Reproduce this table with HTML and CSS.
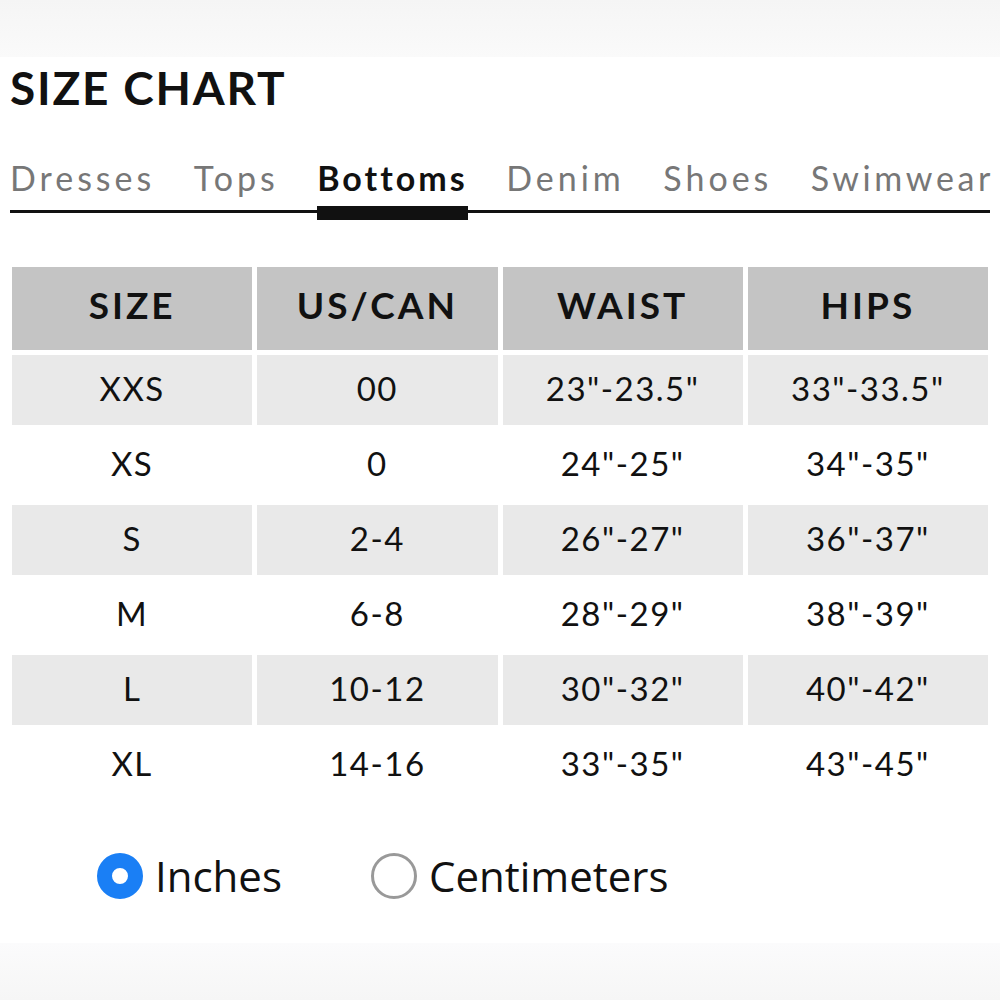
FILE: index.html
```html
<!DOCTYPE html>
<html lang="en">
<head>
    <meta charset="UTF-8">
    <title>Size Chart</title>
    <link rel="stylesheet" href="styles.css">
</head>
<body>

<div class="band"></div>

<div class="page">
    <h1>SIZE CHART</h1>

    <!-- Category tabs -->
    <nav class="tabs">
        <span class="tab">Dresses</span>
        <span class="tab">Tops</span>
        <span class="tab active">Bottoms</span>
        <span class="tab">Denim</span>
        <span class="tab">Shoes</span>
        <span class="tab">Swimwear</span>
    </nav>

    <!-- Size table -->
    <table class="chart">
        <thead>
            <tr><th>SIZE</th><th>US/CAN</th><th>WAIST</th><th>HIPS</th></tr>
        </thead>
        <tbody>
            <tr><td>XXS</td><td>00</td><td>23"-23.5"</td><td>33"-33.5"</td></tr>
            <tr><td>XS</td><td>0</td><td>24"-25"</td><td>34"-35"</td></tr>
            <tr><td>S</td><td>2-4</td><td>26"-27"</td><td>36"-37"</td></tr>
            <tr><td>M</td><td>6-8</td><td>28"-29"</td><td>38"-39"</td></tr>
            <tr><td>L</td><td>10-12</td><td>30"-32"</td><td>40"-42"</td></tr>
            <tr><td>XL</td><td>14-16</td><td>33"-35"</td><td>43"-45"</td></tr>
        </tbody>
    </table>

    <!-- Units -->
    <div class="units">
        <label class="unit"><span class="radio checked"></span>Inches</label>
        <label class="unit"><span class="radio"></span>Centimeters</label>
    </div>
</div>

<div class="band bottom"></div>

</body>
</html>
```

FILE: styles.css
```css
body {
    margin: 0;
    padding: 0;
    background-color: #fff;
    font-family: Lato, "Open Sans", sans-serif;
    color: #111;
}
.band {
    height: 57px;
    background: linear-gradient(to bottom, #f5f5f5, #fafafa);
}
.band.bottom {
    height: 57px;
    background: linear-gradient(to top, #f6f6f6, #fbfbfc);
}
.page {
    padding: 0 10px;
    height: 886px;
}
h1 {
    margin: 0;
    padding-top: 8px;
    font-family: Lato, sans-serif;
    font-size: 46px;
    font-weight: 700;
    line-height: 46px;
    letter-spacing: 1.8px;
    color: #111;
}
.tabs {
    display: flex;
    justify-content: space-between;
    margin-top: 47px;
    border-bottom: 3px solid #111;
    height: 52px;
}
.tab {
    font-size: 34px;
    letter-spacing: 4px;
    color: #777;
    line-height: 40px;
    padding: 0;
}
.tab:last-child {
    letter-spacing: 3.6px;
    margin-right: -4px;
}
.tab.active {
    color: #111;
    font-weight: 700;
    letter-spacing: 3px;
    border-bottom: 14px solid #111;
    height: 48px;
}
.chart {
    margin: 49px -3px 0 -3px;
    width: calc(100% + 6px);
    border-spacing: 5px;
    table-layout: fixed;
}
.chart th,
.chart td {
    text-align: center;
    padding: 0;
}
.chart th {
    height: 83px;
    padding-bottom: 8px;
    box-sizing: border-box;
    background-color: #c4c4c4;
    font-size: 37px;
    font-weight: 700;
    letter-spacing: 3px;
}
.chart td {
    height: 70px;
    padding-bottom: 5px;
    box-sizing: border-box;
    font-size: 33px;
    letter-spacing: 1.5px;
}
.chart tbody tr:nth-child(odd) td {
    background-color: #e9e9e9;
}
.units {
    display: flex;
    gap: 89px;
    margin: 42px 0 0 87px;
}
.unit {
    display: flex;
    align-items: center;
    gap: 12px;
    font-family: "Open Sans", sans-serif;
    font-size: 42px;
    color: #111;
}
.radio {
    width: 46px;
    height: 46px;
    border-radius: 50%;
    border: 3px solid #999;
    box-sizing: border-box;
}
.radio.checked {
    border: 15px solid #1a7ff5;
}
```
